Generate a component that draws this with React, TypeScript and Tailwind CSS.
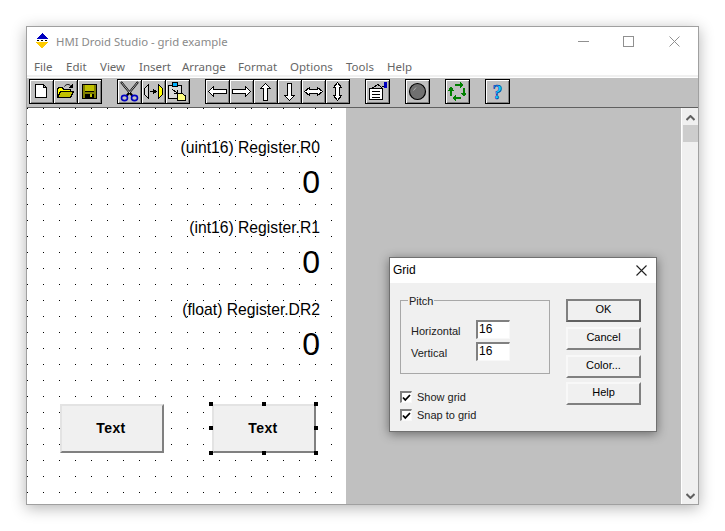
import React from "react";

const Icon = ({ children }: { children: React.ReactNode }) => (
  <svg width="23" height="23" viewBox="1 1 23 23" shapeRendering="crispEdges" className="block">
    {children}
  </svg>
);

const Tool = ({ children, first }: { children: React.ReactNode; first?: boolean }) => (
  <div
    className={`flex h-[25px] w-[25px] shrink-0 items-center justify-center border border-black bg-[#c0c0c0] shadow-[inset_1px_1px_0_#ffffff,inset_-1px_-1px_0_#808080] ${first ? "" : "-ml-px"}`}
  >
    <Icon>{children}</Icon>
  </div>
);

const S = { fill: "#fff", stroke: "#000", strokeWidth: 1 };

const icons = {
  doc: <path d="M6.5 5.5H14.5L17.5 8.5V18.5H6.5ZM14.5 5.5V8.5H17.5" fill="#fff" stroke="#000" />,
  open: (
    <>
      <path d="M4.5 10.5L5.5 8.5H9.5L10.5 10.5H17.5V18.5H4.5Z" fill="#ffff00" stroke="#000" />
      <path d="M4.5 18.5L7.5 12.5H20.5L17.5 18.5Z" fill="#c0c000" stroke="#000" />
      <path d="M11.5 7.5C13 5 15.5 5 17.5 6.5" fill="none" stroke="#000" shapeRendering="auto" />
      <path d="M16 8.5H19.5V5Z" fill="#000" />
    </>
  ),
  save: (
    <>
      <rect x="5.5" y="5.5" width="14" height="14" fill="#808000" stroke="#000" />
      <rect x="8" y="6" width="9" height="6" fill="#c0c000" />
      <path d="M8 12.5H17" stroke="#000" />
      <rect x="8" y="15" width="9" height="4" fill="#000" />
      <rect x="13" y="15" width="2" height="3" fill="#c0c000" />
    </>
  ),
  cut: (
    <g shapeRendering="auto" fill="none">
      <path d="M4 3L15.5 17M21 3L9.5 17" stroke="#000" strokeWidth="2" />
      <path d="M4.5 3.5L13 14M20.5 3.5L12 14" stroke="#fff" strokeWidth=".7" />
      <ellipse cx="7.5" cy="19" rx="3" ry="2.6" stroke="#0000c0" strokeWidth="1.6" />
      <ellipse cx="17.5" cy="19" rx="3" ry="2.6" stroke="#0000c0" strokeWidth="1.6" />
    </g>
  ),
  mirror: (
    <>
      <path d="M7.5 5.5L3.5 9.5V15.5L7.5 19.5Z" fill="#d8d8d8" stroke="#000" />
      <path d="M17.5 5.5L21.5 9.5V15.5L17.5 19.5Z" fill="#ffff00" stroke="#000" />
      <path d="M9 12.5H13" stroke="#000" />
      <path d="M12 9.5L16 12.5L12 15.5Z" fill="#000" />
    </>
  ),
  paste: (
    <>
      <rect x="3.5" y="6.5" width="13" height="13" fill="#d8d8d8" stroke="#000" />
      <rect x="7.5" y="3.5" width="5" height="4" fill="#00b0ff" stroke="#000" />
      <path d="M7 10L12 14M12 14V11M12 14H9" stroke="#000" fill="none" />
      <path d="M12.5 14.5H17.5L20.5 17V21.5H12.5Z" fill="#ffff80" stroke="#000" />
    </>
  ),
  left: <path d="M3.5 12.5L8.5 7.5V10.5H21.5V14.5H8.5V17.5Z" {...S} />,
  right: <path d="M21.5 12.5L16.5 7.5V10.5H3.5V14.5H16.5V17.5Z" {...S} />,
  up: <path d="M12.5 4.5L7.5 9.5H10.5V21.5H14.5V9.5H17.5Z" {...S} />,
  down: <path d="M12.5 21.5L7.5 16.5H10.5V4.5H14.5V16.5H17.5Z" {...S} />,
  lr: <path d="M3.5 12.5L8.5 8.5V10.5H16.5V8.5L21.5 12.5L16.5 16.5V14.5H8.5V16.5Z" {...S} />,
  ud: <path d="M12.5 3.5L8.5 8.5H10.5V16.5H8.5L12.5 21.5L16.5 16.5H14.5V8.5H16.5Z" {...S} />,
  props: (
    <>
      <path d="M4.5 9.5H17.5V20.5H4.5Z" fill="#fff" stroke="#000" />
      <path d="M7 12.5H15M7 15.5H15M7 18H15" stroke="#000" />
      <path d="M6.5 9.5L13 5.5L16.5 8.5" fill="#c0c0c0" stroke="#000" />
      <path d="M16.5 8.5L21 5.5" stroke="#000" />
      <rect x="19" y="3" width="3" height="6" fill="#0000c0" />
    </>
  ),
  circle: (
    <g shapeRendering="auto">
      <circle cx="12.5" cy="12.5" r="8" fill="#707070" stroke="#000" strokeWidth="1.2" />
      <path d="M8.5 11.5L11 8.5" stroke="#b0b0b0" strokeWidth="1" />
    </g>
  ),
  cycle: (
    <g fill="#008000">
      <rect x="10" y="5" width="7" height="2" />
      <path d="M15 2.5L19 6L15 9.5Z" />
      <rect x="18" y="9" width="2" height="6" />
      <path d="M15.5 13.5H22L19 18Z" />
      <rect x="9" y="18" width="7" height="2" />
      <path d="M11 15.5L7 19L11 22.5Z" />
      <rect x="5" y="10" width="2" height="7" />
      <path d="M3 12H9.5L6 7Z" />
    </g>
  ),
  help: (
    <g shapeRendering="auto">
      <text x="12.5" y="19.5" textAnchor="middle" fontSize="20" fontWeight="700" fontFamily="'Liberation Serif', serif" fill="#00d8ff" stroke="#0000a0" strokeWidth=".5">?</text>
    </g>
  ),
};

const Group = ({ items, className }: { items: (keyof typeof icons)[]; className: string }) => (
  <div className={`flex ${className}`}>
    {items.map((k, i) => (
      <Tool key={k} first={i === 0}>{icons[k]}</Tool>
    ))}
  </div>
);

const Handle = ({ className }: { className: string }) => (
  <span className={`absolute h-[4px] w-[4px] bg-black ${className}`} />
);

const CanvasButton = ({ children }: { children: React.ReactNode }) => (
  <div className="flex h-[49px] w-[104px] items-center justify-center border-2 border-t-[#e3e3e3] border-l-[#e3e3e3] border-r-[#808080] border-b-[#808080] bg-[#f0f0f0] pr-[2px] text-[14px] font-bold tracking-[0.4px] text-black">
    {children}
  </div>
);

const DlgBtn = ({ children, dark }: { children: React.ReactNode; dark?: boolean }) => (
  <div
    className={`flex h-[23px] w-[75px] items-center justify-center bg-[#f0f0f0] pb-[3px] text-black ${dark ? "border-2 border-t-[#808080] border-l-[#808080] border-r-[#606060] border-b-[#606060]" : "border-2 border-t-[#f8f8f8] border-l-[#f8f8f8] border-r-[#808080] border-b-[#808080]"}`}
  >
    {children}
  </div>
);

const Num = () => (
  <div className="h-[19px] w-[34px] border-t-2 border-l-2 border-r border-b border-t-[#808080] border-l-[#808080] border-r-[#f8f8f8] border-b-[#f8f8f8] bg-white pl-px text-[12px] leading-[15px] text-black">
    16
  </div>
);

const Check = ({ label }: { label: string }) => (
  <div className="flex h-[12px] items-center gap-[5px]">
    <div className="flex h-[12px] w-[12px] items-center justify-center border-t-2 border-l-2 border-r border-b border-t-[#808080] border-l-[#808080] border-r-[#f8f8f8] border-b-[#f8f8f8] bg-white">
      <svg width="9" height="8" viewBox="0 0 9 8"><path d="M1 3.5L3.3 6L8 1" fill="none" stroke="#000" strokeWidth="1.8" /></svg>
    </div>
    <span className="text-[#202020]">{label}</span>
  </div>
);

const Field = ({ label, mt }: { label: string; mt: string }) => (
  <div className={`flex items-center justify-between pl-[10px] pr-[39px] ${mt}`}>
    <span className="pt-[2px] text-[#202020]">{label}</span>
    <Num />
  </div>
);

const Reg = ({ label, labelMt }: { label: string; labelMt: string }) => (
  <>
    <div className={`h-[20px] text-[15.7px] leading-[20px] text-black ${labelMt}`}>{label}</div>
    <div className="mt-[6px] h-[36px] text-[32px] leading-[36px] text-black">0</div>
  </>
);

const menu: [string, string][] = [
  ["File", "w-[32px]"],
  ["Edit", "w-[34px]"],
  ["View", "w-[39px]"],
  ["Insert", "w-[43px]"],
  ["Arrange", "w-[56px]"],
  ["Format", "w-[52px]"],
  ["Options", "w-[56px]"],
  ["Tools", "w-[41px]"],
  ["Help", "w-[40px]"],
];

export default function App() {
  return (
    <div className="h-[531px] w-[725px] overflow-hidden bg-white pl-[26px] pt-[26px]">
      <div className="relative flex h-[479px] w-[673px] flex-col border border-[#a0a0a0] bg-white font-['Noto_Sans',sans-serif] shadow-[0_3px_14px_rgba(0,0,0,0.3)]">
        <div className="flex h-[28px] shrink-0 items-center pl-[9px]">
          <svg width="12" height="16" viewBox="0 0 12 16" shapeRendering="crispEdges">
            <path d="M6 0L12 6H0Z" fill="#0000c0" />
            <path d="M1 7H3V8H1ZM5 7H7V8H5ZM9 7H11V8H9Z" fill="#000" />
            <path d="M0 9H12L6 16Z" fill="#ffcc00" />
          </svg>
          <span className="ml-[8px] mt-[2px] text-[11.35px] leading-none text-[#8a8a8a]">HMI Droid Studio - grid example</span>
          <div className="ml-auto flex items-center pr-[18px] text-[#808080]">
            <svg width="11" height="11" viewBox="0 0 11 11" shapeRendering="crispEdges"><path d="M0 5.5H11" stroke="#909090" /></svg>
            <svg width="11" height="11" viewBox="0 0 11 11" shapeRendering="crispEdges" className="ml-[34px]"><rect x=".5" y=".5" width="10" height="10" fill="none" stroke="#909090" /></svg>
            <svg width="11" height="11" viewBox="0 0 11 11" className="ml-[35px]"><path d="M.5 .5L10.5 10.5M10.5 .5L.5 10.5" stroke="#909090" strokeWidth="1" /></svg>
          </div>
        </div>
        <div className="flex h-[20px] shrink-0 items-center pl-[7px] pt-[3px] text-[11.5px] leading-none text-[#666666]">
          {menu.map(([m, w]) => (
            <span key={m} className={`shrink-0 ${w}`}>{m}</span>
          ))}
        </div>
        <div className="h-[2px] shrink-0 bg-[#f0f0f0]" />
        <div className="h-px shrink-0 bg-white" />
        <div className="flex h-[29px] shrink-0 items-start bg-[#c0c0c0] pl-[2px] pt-px">
          <Group items={["doc", "open", "save"]} className="" />
          <Group items={["cut", "mirror", "paste"]} className="ml-[15px]" />
          <Group items={["left", "right", "up", "down", "lr", "ud"]} className="ml-[15px]" />
          <Group items={["props"]} className="ml-[15px]" />
          <Group items={["circle"]} className="ml-[15px]" />
          <Group items={["cycle"]} className="ml-[15px]" />
          <Group items={["help"]} className="ml-[15px]" />
        </div>
        <div className="h-px shrink-0 bg-[#606060]" />
        <div className="flex min-h-0 flex-1">
          <div className="flex flex-1 bg-[#c0c0c0]">
            <div className="relative flex w-[319px] flex-col items-end bg-white bg-[radial-gradient(circle_at_0_0,#000_1px,transparent_1px)] bg-[length:16px_16px] pr-[26px] font-['Liberation_Sans',sans-serif]">
              <Reg label="(uint16) Register.R0" labelMt="mt-[30px]" />
              <Reg label="(int16) Register.R1" labelMt="mt-[18px]" />
              <Reg label="(float) Register.DR2" labelMt="mt-[20px]" />
              <div className="mt-[42px] flex gap-[48px] self-start pl-[33px]">
                <CanvasButton>Text</CanvasButton>
                <div className="relative">
                  <CanvasButton>Text</CanvasButton>
                  <Handle className="-left-[3px] -top-[2px]" />
                  <Handle className="left-[50px] -top-[2px]" />
                  <Handle className="-right-[2px] -top-[2px]" />
                  <Handle className="-left-[3px] top-[22px]" />
                  <Handle className="-right-[2px] top-[22px]" />
                  <Handle className="-left-[3px] -bottom-[2px]" />
                  <Handle className="left-[50px] -bottom-[2px]" />
                  <Handle className="-right-[2px] -bottom-[2px]" />
                </div>
              </div>
            </div>
          </div>
          <div className="flex w-[17px] shrink-0 flex-col items-center border-l border-white bg-[#f0f0f0]">
            <svg width="9" height="6" viewBox="0 0 9 6" className="mt-[7px]"><path d="M.5 5L4.5 1L8.5 5" fill="none" stroke="#606060" strokeWidth="2" /></svg>
            <div className="mt-[4px] h-[17px] w-[15px] bg-[#cdcdcd]" />
            <svg width="9" height="6" viewBox="0 0 9 6" className="mt-auto mb-[5px]"><path d="M.5 1L4.5 5L8.5 1" fill="none" stroke="#606060" strokeWidth="2" /></svg>
          </div>
        </div>

        <div className="absolute left-[362px] top-[230px] flex h-[175px] w-[268px] flex-col border border-[#707070] bg-[#f0f0f0] font-['Liberation_Sans',sans-serif] text-[11px] leading-[14px] shadow-[0_2px_10px_rgba(0,0,0,0.45)]">
          <div className="flex h-[25px] shrink-0 items-center justify-between bg-white pb-[1px] pl-[3px] pr-[9px] text-[12px] text-black">
            <span>Grid</span>
            <svg width="11" height="11" viewBox="0 0 11 11"><path d="M.5 .5L10.5 10.5M10.5 .5L.5 10.5" stroke="#202020" strokeWidth="1.1" /></svg>
          </div>
          <div className="flex flex-1 justify-between pl-[10px] pr-[15px] pt-[16px]">
            <div className="flex flex-col">
              <div className="relative mt-px flex h-[74px] w-[150px] flex-col border border-[#a8a8a8] pt-[19px]">
                <span className="absolute -top-[7px] left-[7px] bg-[#f0f0f0] px-px text-[#202020]">Pitch</span>
                <Field label="Horizontal" mt="" />
                <Field label="Vertical" mt="mt-[3px]" />
              </div>
              <div className="mt-[17px] flex flex-col gap-[6px]">
                <Check label="Show grid" />
                <Check label="Snap to grid" />
              </div>
            </div>
            <div className="flex flex-col">
              <DlgBtn dark>OK</DlgBtn>
              <div className="mt-[5px]"><DlgBtn>Cancel</DlgBtn></div>
              <div className="mt-[5px]"><DlgBtn>Color...</DlgBtn></div>
              <div className="mt-[4px]"><DlgBtn>Help</DlgBtn></div>
            </div>
          </div>
        </div>
      </div>
    </div>
  );
}
